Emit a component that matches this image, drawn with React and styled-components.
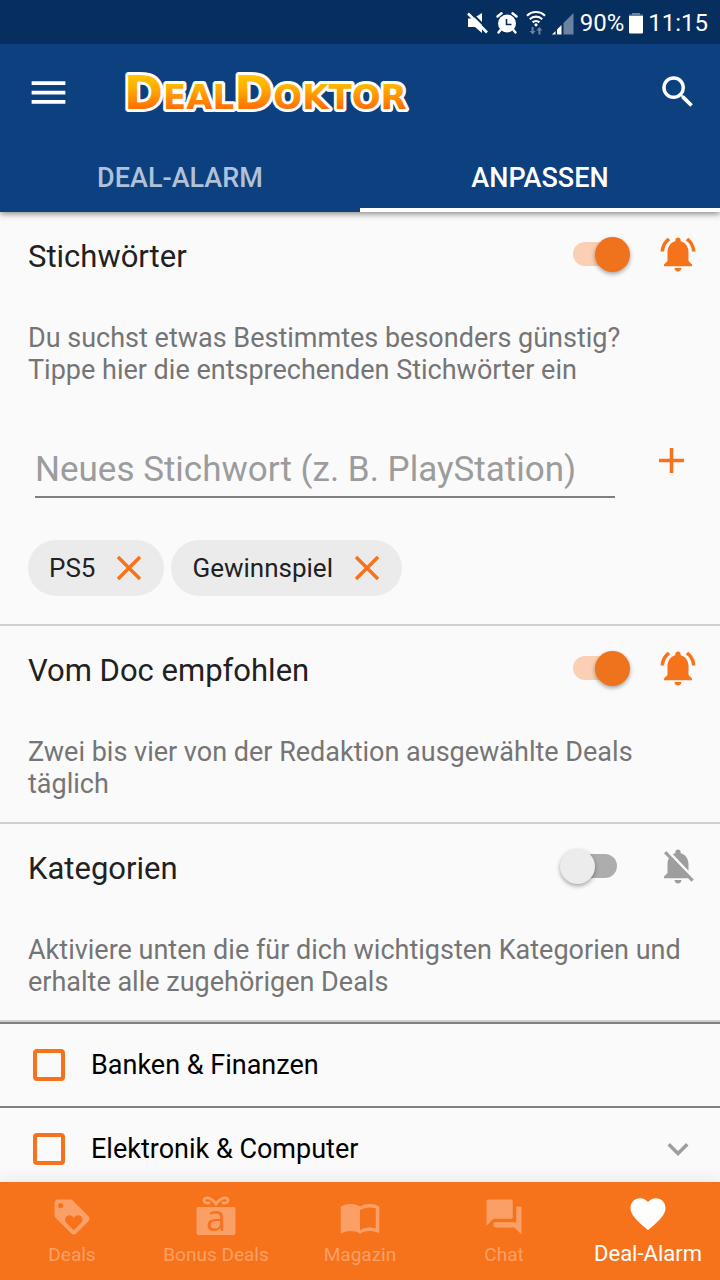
import React, { useState } from 'react';
import styled, { createGlobalStyle } from 'styled-components';
import {
  MdAdd,
  MdClose,
  MdExpandMore,
  MdFavorite,
  MdForum,
  MdImportContacts,
  MdLoyalty,
  MdMenu,
  MdNotificationsActive,
  MdNotificationsOff,
  MdSearch,
} from 'react-icons/md';

const ORANGE = '#f6731c';

const GlobalStyle = createGlobalStyle`
  * {
    box-sizing: border-box;
  }

  body {
    margin: 0;
    background: #fafafa;
    font-family: Roboto, 'Liberation Sans', sans-serif;
    color: #212121;
  }

  button,
  input {
    font: inherit;
    color: inherit;
  }

  svg {
    display: block;
    flex-shrink: 0;
  }
`;

const Screen = styled.div`
  height: 100vh;
  display: flex;
  flex-direction: column;
`;

const StatusBar = styled.div`
  position: relative;
  z-index: 2;
  height: 44px;
  flex-shrink: 0;
  padding: 2px 12px 0 0;
  display: flex;
  align-items: center;
  justify-content: flex-end;
  gap: 5px;
  background: #062e5e;
  color: #fff;
  font-size: 24px;
  line-height: 28px;
`;

const Header = styled.header`
  position: relative;
  z-index: 1;
  flex-shrink: 0;
  background: #0c407f;
  color: #fff;
  box-shadow: 0 2px 6px rgba(0, 0, 0, 0.45);
`;

const Toolbar = styled.div`
  height: 96px;
  padding: 0 20px 0 26px;
  display: flex;
  align-items: center;
`;

const IconButton = styled.button`
  width: 44px;
  height: 44px;
  padding: 0;
  border: 0;
  flex-shrink: 0;
  display: flex;
  align-items: center;
  justify-content: center;
  background: none;
  color: ${({ $color }) => $color || 'inherit'};
  cursor: pointer;
`;

const LogoLink = styled.a`
  margin-left: 52px;
  margin-right: auto;
`;

const Tabs = styled.div`
  display: flex;
`;

const Tab = styled.button`
  flex: 1;
  height: 72px;
  padding: 8px 0 0;
  border: 0;
  border-bottom: 4px solid ${({ $active }) => ($active ? '#fff' : 'transparent')};
  background: none;
  color: ${({ $active }) => ($active ? '#fff' : '#b0c2d7')};
  font-size: 27px;
  font-weight: 500;
  line-height: 32px;
  cursor: pointer;
`;

const Main = styled.main`
  flex: 1;
  min-height: 0;
  overflow-y: auto;
  scrollbar-width: none;
`;

const Section = styled.section`
  border-bottom: 2px solid #cfcfcf;
`;

const SectionHead = styled.div`
  height: 84px;
  padding: 0 20px 0 28px;
  display: flex;
  align-items: center;
  gap: 26px;
`;

const SectionTitle = styled.h2`
  margin: 0;
  padding-top: 5px;
  flex: 1;
  font-size: 31px;
  font-weight: 400;
  line-height: 36px;
`;

const Description = styled.p`
  margin: 0;
  padding: 26px 28px 22px;
  color: #757575;
  font-size: 27px;
  line-height: 32px;
`;

const Switch = styled.input`
  appearance: none;
  width: 70px;
  height: 36px;
  margin: 0;
  flex-shrink: 0;
  display: grid;
  align-items: center;
  cursor: pointer;

  &::before,
  &::after {
    content: '';
    grid-area: 1 / 1;
  }

  &::before {
    height: 24px;
    margin: 0 13px;
    border-radius: 12px;
    background: #adadad;
  }

  &::after {
    width: 35px;
    height: 35px;
    border-radius: 50%;
    background: #ececec;
    box-shadow: 0 2px 4px rgba(0, 0, 0, 0.35);
  }

  &:checked::before {
    background: #facfb3;
  }

  &:checked::after {
    justify-self: end;
    background: #ef721d;
  }
`;

const KeywordForm = styled.form`
  padding: 30px 27px 0 35px;
  display: flex;
  align-items: flex-start;
  justify-content: space-between;
`;

const KeywordInput = styled.input`
  width: 580px;
  min-width: 0;
  flex: 0 1 auto;
  height: 60px;
  padding: 4px 0 0;
  border: 0;
  border-bottom: 2px solid #808080;
  border-radius: 0;
  outline: 0;
  background: none;
  font-size: 35px;
  line-height: 44px;

  &::placeholder {
    color: #9c9c9c;
    opacity: 1;
  }
`;

const Chips = styled.ul`
  margin: 0;
  padding: 42px 28px 28px;
  display: flex;
  flex-wrap: wrap;
  gap: 7px;
  list-style: none;
`;

const Chip = styled.li`
  height: 56px;
  padding: 0 13px 0 21px;
  display: flex;
  align-items: center;
  gap: 12px;
  border-radius: 28px;
  background: #ebebeb;
  font-size: 26px;
  line-height: 32px;
`;

const CategoryList = styled.ul`
  margin: 0;
  padding: 0;
  list-style: none;
  border-top: 2px solid #808080;
`;

const CategoryRow = styled.li`
  height: 84px;
  padding: 0 20px 0 33px;
  display: flex;
  align-items: center;
  border-bottom: 2px solid #808080;
`;

const CategoryLabel = styled.label`
  flex: 1;
  display: flex;
  align-items: center;
  gap: 26px;
  color: #000;
  font-size: 27px;
  line-height: 32px;
  cursor: pointer;
`;

const Checkbox = styled.input`
  appearance: none;
  width: 32px;
  height: 32px;
  margin: 0;
  border: 4px solid ${ORANGE};
  border-radius: 4px;

  &:checked {
    background: ${ORANGE};
  }
`;

const BottomNav = styled.nav`
  position: relative;
  z-index: 1;
  height: 98px;
  flex-shrink: 0;
  display: flex;
  background: ${ORANGE};
  box-shadow: 0 -2px 16px rgba(0, 0, 0, 0.08);
`;

const NavLink = styled.a`
  flex: 1 1 0;
  padding-top: ${({ $active }) => ($active ? 11 : 14)}px;
  display: flex;
  flex-direction: column;
  align-items: center;
  gap: ${({ $active }) => ($active ? 7 : 5)}px;
  color: ${({ $active }) => ($active ? '#fff' : '#faa066')};
  font-size: ${({ $active }) => ($active ? 22 : 19)}px;
  line-height: 24px;
  text-decoration: none;
  white-space: nowrap;
`;

const MutedIcon = () => (
  <svg width="22" height="22" viewBox="0 0 22 22" aria-hidden="true">
    <path d="M1 6.500h5L15 1v20l-7-6H1z" fill="currentColor" />
    <path d="M3-.5 22 18.500" stroke="#062e5e" strokeWidth="2" />
    <path d="M1 1.500 20 20.500" stroke="currentColor" strokeWidth="2.600" />
  </svg>
);

const AlarmIcon = () => (
  <svg width="26" height="24" viewBox="-2 0 26 24" aria-hidden="true">
    <circle cx="11" cy="12.500" r="9" fill="currentColor" />
    <path
      d="M1.500 5.500 5.500 2.200M20.500 5.500 16.500 2.200M4.500 19l-2 2.500M17.500 19l2 2.500"
      stroke="currentColor"
      strokeWidth="2.400"
      strokeLinecap="round"
    />
    <path d="M10.500 8v5.500h5" fill="none" stroke="#062e5e" strokeWidth="1.600" />
  </svg>
);

const WifiIcon = () => (
  <svg width="22" height="26" viewBox="-1 1 22 26" aria-hidden="true">
    <g fill="none" stroke="currentColor" strokeWidth="2.200">
      <path d="M1 6.800a12.600 12.600 0 0 1 18 0" />
      <path d="M3.800 10.200a8.800 8.800 0 0 1 12.400 0" />
      <path d="M6.600 13.400a4.900 4.900 0 0 1 6.800 0" />
    </g>
    <circle cx="10" cy="15.800" r="1.600" fill="currentColor" />
    <path
      d="M5.600 18h2v4h2l-3 3.500-3-3.500h2zM12.400 25.500h2v-4h2l-3-3.500-3 3.500h2z"
      fill="#6983a1"
    />
  </svg>
);

const SignalIcon = () => (
  <svg width="23" height="23" viewBox="0 0 23 23" aria-hidden="true">
    <path d="M0 22.500 3.500 19v3.500zM5 22.500v-5l4.500-4.500v9.500z" fill="currentColor" />
    <path d="M11.500 22.500V11L21.500 1v21.500z" fill="#6983a1" />
  </svg>
);

const BatteryIcon = () => (
  <svg width="14" height="22" viewBox="0 0 14 22" aria-hidden="true">
    <path d="M3 1h8v1.500H14V5H0V2.500h3z" fill="#6983a1" />
    <path d="M0 4h14v16.500a1 1 0 0 1-1 1H1a1 1 0 0 1-1-1z" fill="currentColor" />
  </svg>
);

const GiftIcon = () => (
  <svg width="42" height="42" viewBox="0 0 42 42" overflow="visible" aria-hidden="true">
    <path
      d="M21 8C18 3 12.500.8 10 2.500S9.500 7.500 14 7M21 8C24 3 29.500.8 32 2.500S32.500 7.500 28 7"
      fill="none"
      stroke="currentColor"
      strokeWidth="2.800"
      strokeLinecap="round"
    />
    <rect x="1.500" y="11" width="39" height="28" rx="2" fill="currentColor" />
    <text
      x="21"
      y="35"
      textAnchor="middle"
      fontFamily="Open Sans, sans-serif"
      fontSize="36"
      fill={ORANGE}
    >
      a
    </text>
  </svg>
);

const Logo = () => (
  <svg width="294" height="64" viewBox="0 0 294 64" role="img" aria-label="DealDoktor">
    <defs>
      <linearGradient id="logoFill" gradientUnits="userSpaceOnUse" x1="0" y1="15" x2="0" y2="50">
        <stop offset="0" stopColor="#ffc400" />
        <stop offset="0.35" stopColor="#ffb000" />
        <stop offset="1" stopColor="#ff6a00" />
      </linearGradient>
    </defs>
    <text
      x="2"
      y="49"
      fontFamily="DejaVu Sans, sans-serif"
      fontWeight="700"
      fontSize="34"
      fill="url(#logoFill)"
      stroke="#fff"
      strokeWidth="6"
      strokeLinejoin="round"
      paintOrder="stroke"
    >
      <tspan fontSize="47">D</tspan>
      EAL
      <tspan fontSize="47">D</tspan>
      OKTOR
    </text>
  </svg>
);

const navItems = [
  { label: 'Deals', icon: <MdLoyalty size={42} /> },
  { label: 'Bonus Deals', icon: <GiftIcon /> },
  { label: 'Magazin', icon: <MdImportContacts size={42} /> },
  { label: 'Chat', icon: <MdForum size={42} /> },
  { label: 'Deal-Alarm', icon: <MdFavorite size={42} />, active: true },
];

const categories = [
  { name: 'Banken & Finanzen' },
  { name: 'Elektronik & Computer', expandable: true },
];

const AlarmSection = ({ title, text, initial, children }) => {
  const [enabled, setEnabled] = useState(initial);

  return (
    <Section>
      <SectionHead>
        <SectionTitle>{title}</SectionTitle>
        <Switch
          type="checkbox"
          role="switch"
          aria-label={title}
          checked={enabled}
          onChange={(event) => setEnabled(event.target.checked)}
        />
        <IconButton
          type="button"
          aria-label={`Benachrichtigungen ${title}`}
          $color={enabled ? ORANGE : '#9e9e9e'}
        >
          {enabled ? <MdNotificationsActive size={42} /> : <MdNotificationsOff size={42} />}
        </IconButton>
      </SectionHead>
      <Description>{text}</Description>
      {children}
    </Section>
  );
};

const Keywords = () => {
  const [keywords, setKeywords] = useState(['PS5', 'Gewinnspiel']);
  const [value, setValue] = useState('');

  const handleSubmit = (event) => {
    event.preventDefault();
    if (value && !keywords.includes(value)) {
      setKeywords([...keywords, value]);
    }
    setValue('');
  };

  return (
    <>
      <KeywordForm onSubmit={handleSubmit}>
        <KeywordInput
          type="text"
          aria-label="Neues Stichwort"
          placeholder="Neues Stichwort (z. B. PlayStation)"
          value={value}
          onChange={(event) => setValue(event.target.value)}
        />
        <IconButton type="submit" aria-label="Hinzufügen" $color={ORANGE}>
          <MdAdd size={43} />
        </IconButton>
      </KeywordForm>
      <Chips>
        {keywords.map((keyword) => (
          <Chip key={keyword}>
            {keyword}
            <IconButton
              type="button"
              aria-label={`${keyword} entfernen`}
              $color={ORANGE}
              onClick={() => setKeywords(keywords.filter((k) => k !== keyword))}
            >
              <MdClose size={42} />
            </IconButton>
          </Chip>
        ))}
      </Chips>
    </>
  );
};

const App = () => (
  <>
    <GlobalStyle />
    <Screen>
      <StatusBar>
        <MutedIcon />
        <AlarmIcon />
        <WifiIcon />
        <SignalIcon />
        <span>90%</span>
        <BatteryIcon />
        <span>11:15</span>
      </StatusBar>
      <Header>
        <Toolbar>
          <IconButton type="button" aria-label="Menü">
            <MdMenu size={45} />
          </IconButton>
          <LogoLink href="#start">
            <Logo />
          </LogoLink>
          <IconButton type="button" aria-label="Suche">
            <MdSearch size={42} />
          </IconButton>
        </Toolbar>
        <Tabs role="tablist">
          <Tab type="button" role="tab" aria-selected="false">DEAL-ALARM</Tab>
          <Tab type="button" role="tab" aria-selected="true" $active>ANPASSEN</Tab>
        </Tabs>
      </Header>
      <Main>
        <AlarmSection
          title="Stichwörter"
          text="Du suchst etwas Bestimmtes besonders günstig? Tippe hier die entsprechenden Stichwörter ein"
          initial
        >
          <Keywords />
        </AlarmSection>
        <AlarmSection
          title="Vom Doc empfohlen"
          text="Zwei bis vier von der Redaktion ausgewählte Deals täglich"
          initial
        />
        <AlarmSection
          title="Kategorien"
          text="Aktiviere unten die für dich wichtigsten Kategorien und erhalte alle zugehörigen Deals"
          initial={false}
        />
        <CategoryList>
          {categories.map(({ name, expandable }) => (
            <CategoryRow key={name}>
              <CategoryLabel>
                <Checkbox type="checkbox" />
                {name}
              </CategoryLabel>
              {expandable && (
                <IconButton type="button" aria-label={`${name} aufklappen`} $color="#9e9e9e">
                  <MdExpandMore size={42} />
                </IconButton>
              )}
            </CategoryRow>
          ))}
        </CategoryList>
      </Main>
      <BottomNav>
        {navItems.map(({ label, icon, active }) => (
          <NavLink key={label} href={`#${label}`} $active={active}>
            {icon}
            {label}
          </NavLink>
        ))}
      </BottomNav>
    </Screen>
  </>
);

export default App;
